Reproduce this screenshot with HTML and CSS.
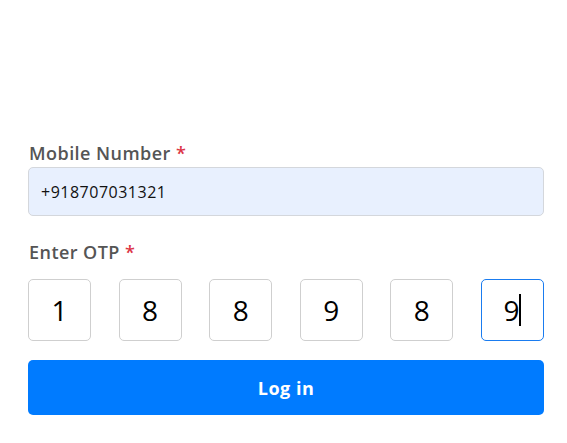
FILE: index.html
```html
<!DOCTYPE html>
<html>
<head>
<meta charset="utf-8">
<link rel="stylesheet" href="styles.css">
</head>
<body>
<form class="login">
  <div class="field">
    <label class="label">Mobile Number <span class="req">*</span></label>
    <div class="phone">+918707031321</div>
  </div>
  <div class="field">
    <label class="label">Enter OTP <span class="req">*</span></label>
    <div class="otp">
      <div class="digit">1</div>
      <div class="digit">8</div>
      <div class="digit">8</div>
      <div class="digit">9</div>
      <div class="digit">8</div>
      <div class="digit focused">9<span class="caret"></span></div>
    </div>
  </div>
  <button type="button" class="submit">Log in</button>
</form>
</body>
</html>
```
FILE: styles.css
```css
html, body {
  margin: 0;
  padding: 0;
  background: #ffffff;
}
body {
  font-family: "Open Sans", "Noto Sans", sans-serif;
}
.login {
  width: 516px;
  padding: 141px 0 0 28px;
  display: flex;
  flex-direction: column;
}
.field {
  display: flex;
  flex-direction: column;
}
.label {
  font-size: 18px;
  font-weight: 600;
  line-height: 24px;
  color: #555555;
  letter-spacing: 0.45px;
  margin-bottom: 2px;
  padding-left: 1px;
}
.req {
  color: #dc3545;
}
.phone {
  box-sizing: border-box;
  height: 49px;
  border: 1px solid #d4d7dc;
  border-radius: 5px;
  background: #e8f0fe;
  padding: 0 12px;
  display: flex;
  align-items: center;
  font-size: 16px;
  letter-spacing: 0.5px;
  color: #111;
  margin-bottom: 24px;
}
.otp {
  display: flex;
  justify-content: space-between;
  margin-top: 13px;
  margin-bottom: 19px;
}
.digit {
  box-sizing: border-box;
  width: 63px;
  height: 62px;
  border: 1px solid #cfcfcf;
  border-radius: 5px;
  display: flex;
  align-items: center;
  justify-content: center;
  font-size: 28px;
  color: #000;
}
.digit.focused {
  border-color: #1a7cf0;
}
.caret {
  display: inline-block;
  width: 2px;
  height: 32px;
  background: #000;
}
.submit {
  height: 55px;
  border: 0;
  border-radius: 5px;
  background: #007bff;
  color: #ffffff;
  font-family: "Open Sans", "Noto Sans", sans-serif;
  font-size: 18px;
  font-weight: 700;
  letter-spacing: 0.5px;
}
```
